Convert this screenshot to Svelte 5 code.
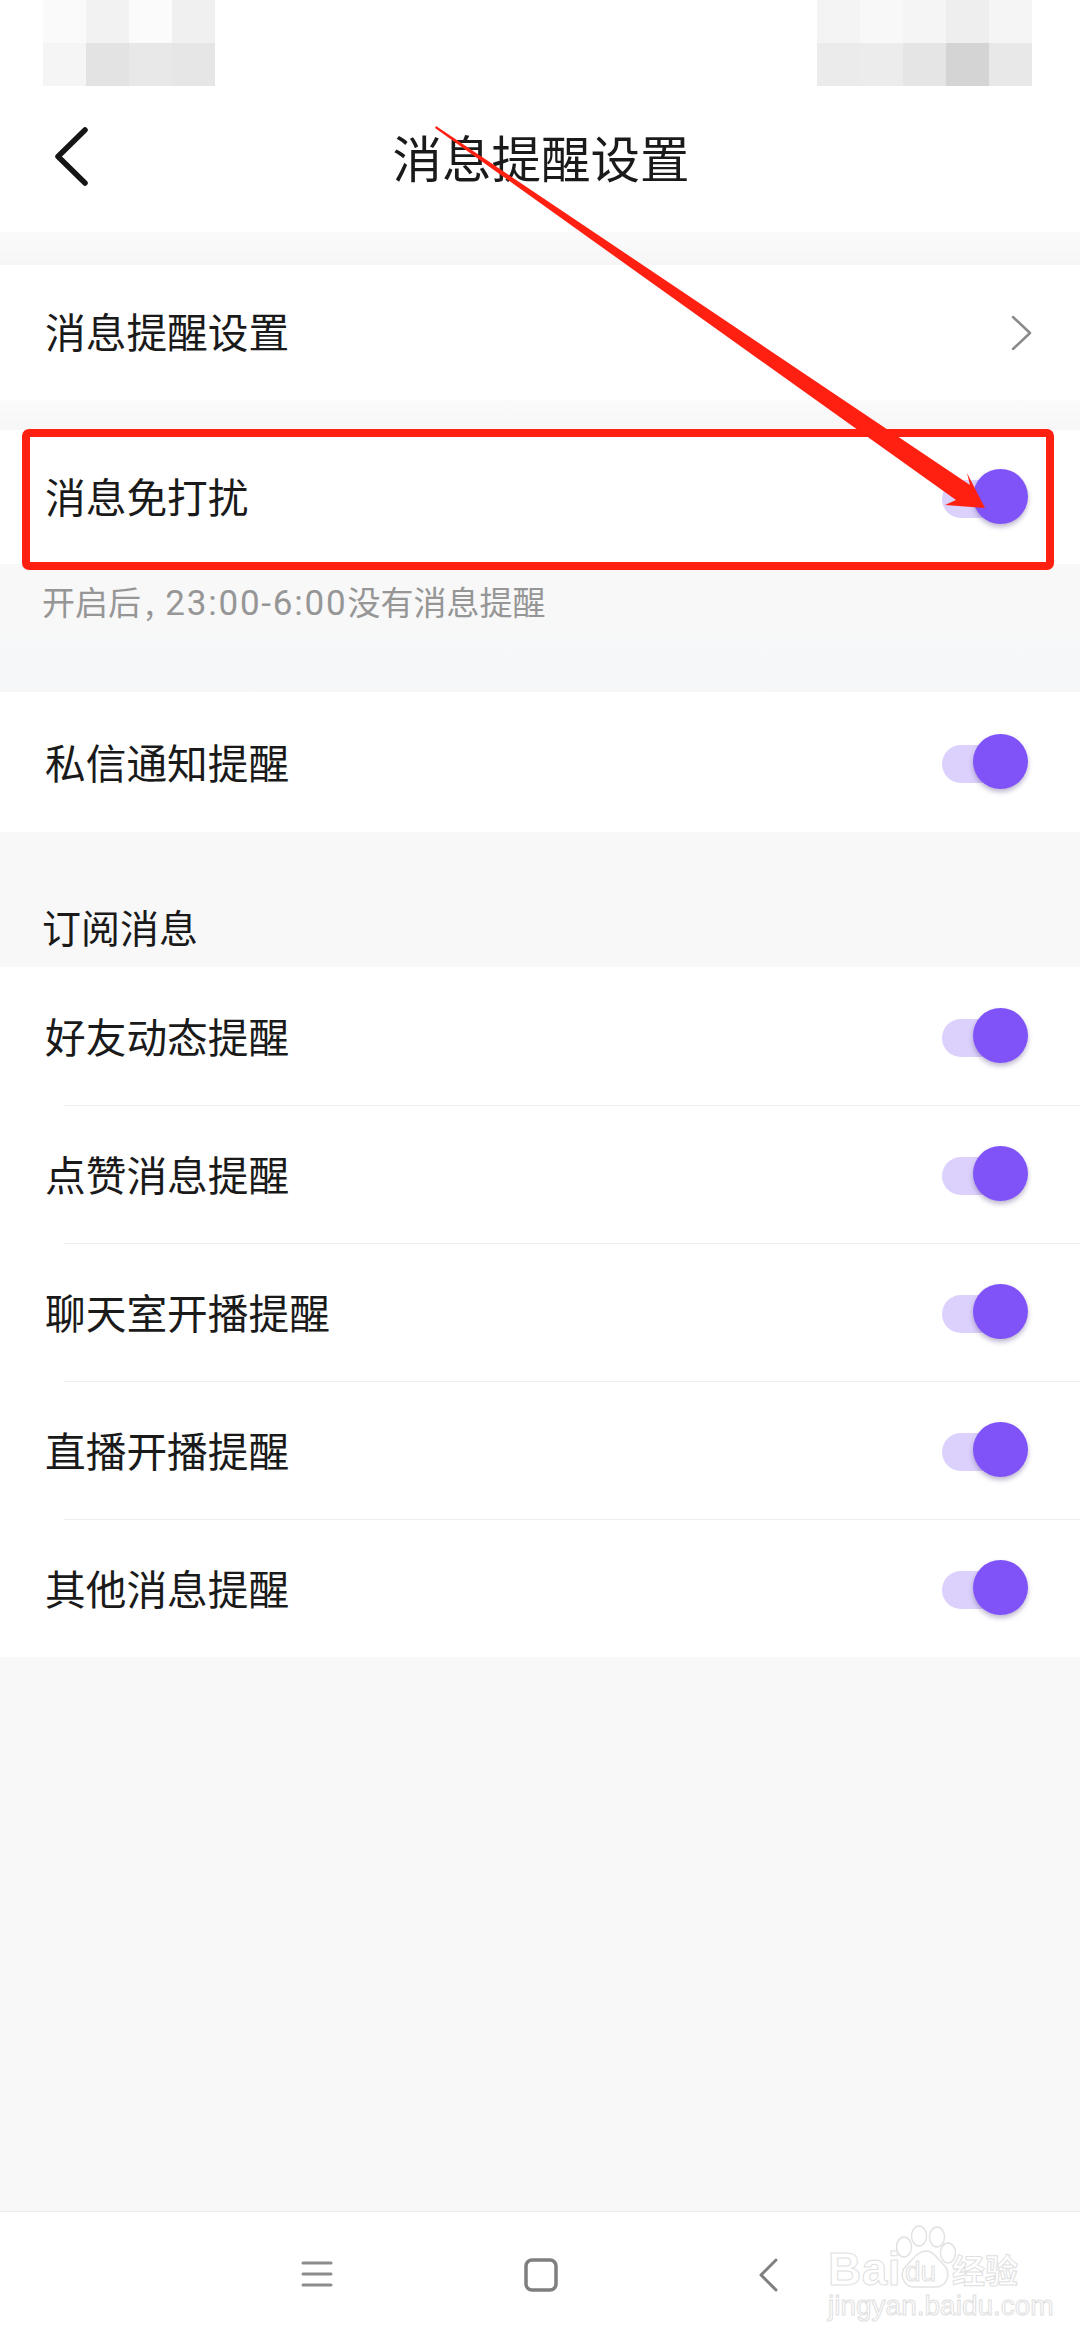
<script lang="ts">
  const leftCells = ['#fafafa', '#f2f2f2', '#fbfbfb', '#f0f0f0', '#f5f5f5', '#e3e3e3', '#e8e8e8', '#e6e6e6'];
  const rightCells = ['#f4f4f4', '#f8f8f8', '#f5f5f5', '#eeeeee', '#f5f5f5', '#ebebeb', '#ececec', '#e5e5e5', '#d4d4d4', '#e8e8e8'];
  const subscriptions = ['好友动态提醒', '点赞消息提醒', '聊天室开播提醒', '直播开播提醒', '其他消息提醒'];
</script>

{#snippet toggle()}
  <span class="toggle"><span class="track"></span><span class="knob"></span></span>
{/snippet}

<div class="page">
  <header class="header">
    <div class="status">
      <div class="mosaic left">
        {#each leftCells as c}<i style="background:{c}"></i>{/each}
      </div>
      <div class="mosaic right">
        {#each rightCells as c}<i style="background:{c}"></i>{/each}
      </div>
    </div>
    <div class="titlebar">
      <svg class="back" width="36" height="62" viewBox="0 0 36 62" fill="none" stroke="#151515" stroke-width="5.5" stroke-linecap="round" stroke-linejoin="round">
        <path d="M31 4 4 30.500 31 57" />
      </svg>
      <h1>消息提醒设置</h1>
    </div>
  </header>

  <div class="gap first"></div>
  <div class="row plain">
    <span class="name">消息提醒设置</span>
    <svg width="22" height="36" viewBox="0 0 22 36" fill="none" stroke="#8a8a8a" stroke-width="2.500" stroke-linecap="round" stroke-linejoin="round">
      <path d="M2 2 19 18 2 34" />
    </svg>
  </div>
  <div class="gap second"></div>
  <div class="row dnd">
    <span class="name">消息免打扰</span>
    {@render toggle()}
  </div>
  <div class="hint">开启后<span class="comma">,</span><span class="nums">23:00-6:00</span>没有消息提醒</div>
  <div class="row chat">
    <span class="name">私信通知提醒</span>
    {@render toggle()}
  </div>
  <div class="label">订阅消息</div>
  <div class="list">
    {#each subscriptions as name}
      <div class="row sub">
        <span class="name">{name}</span>
        {@render toggle()}
      </div>
    {/each}
  </div>

  <div class="fill"></div>

  <nav class="nav">
    <svg class="nav-menu" width="32" height="28" viewBox="0 0 32 28" fill="none" stroke="#8c8c8c" stroke-width="3" stroke-linecap="round">
      <path d="M2 3H30M2 14H30M2 25H30" />
    </svg>
    <svg class="nav-home" width="34" height="34" viewBox="0 0 34 34" fill="none" stroke="#7f7f7f" stroke-width="3.500">
      <rect x="2" y="2" width="30" height="30" rx="6" />
    </svg>
    <svg class="nav-back" width="20" height="34" viewBox="0 0 20 34" fill="none" stroke="#7f7f7f" stroke-width="3" stroke-linecap="round" stroke-linejoin="round">
      <path d="M18 2 3 17 18 32" />
    </svg>
  </nav>

  <!-- annotation drawn over the screenshot -->
  <div class="redbox"></div>
  <svg class="arrow" width="1080" height="600" viewBox="0 0 1080 600">
    <path d="M436 126 970 485 967 473 985 508 945 505 956 500 435 128Z" fill="#ff2012" />
  </svg>

  <div class="watermark">
    <svg class="paw" width="60" height="66" viewBox="0 0 60 66" fill="#fff" stroke="#e2e2e2" stroke-width="1.500">
      <ellipse cx="8" cy="22" rx="7.500" ry="10" />
      <ellipse cx="23" cy="11" rx="7.500" ry="10" />
      <ellipse cx="41" cy="12" rx="7.500" ry="10" />
      <ellipse cx="52" cy="28" rx="7.500" ry="10" />
      <path d="M30 26C38 26 41 34 48 40 55 47 52 62 40 62H18C8 62 2 49 10 41 17 35 21 26 30 26Z" />
    </svg>
    <div class="wm-top">
      <span class="bai">Bai</span><span class="du">du</span><span class="jy">经验</span>
    </div>
    <div class="wm-url">jingyan.baidu.com</div>
  </div>
</div>

<style>
  :global(body) {
    margin: 0;
    background: #f8f8f8;
  }

  .page {
    position: relative;
    width: 1080px;
    height: 2340px;
    display: flex;
    flex-direction: column;
    overflow: hidden;
    background: #f8f8f8;
    font-family: "Noto Sans CJK SC", "Noto Sans", sans-serif;
    color: #1a1a1a;
  }

  .header {
    height: 232px;
    flex: none;
    background: #fff;
  }

  .status {
    display: flex;
    justify-content: space-between;
    padding: 0 48px 0 43px;
    height: 86px;
  }

  .mosaic {
    display: grid;
    grid-auto-rows: 43px;
  }

  .mosaic.left {
    grid-template-columns: repeat(4, 43px);
  }

  .mosaic.right {
    grid-template-columns: repeat(5, 43px);
  }

  .titlebar {
    position: relative;
    display: flex;
    justify-content: center;
    align-items: center;
    height: 72px;
    margin-top: 33px;
  }

  .back {
    position: absolute;
    left: 54px;
    top: 7px;
  }

  h1 {
    margin: 3px 0 0 2px;
    font-size: 49.500px;
    font-weight: 400;
    line-height: 72px;
  }

  .gap {
    flex: none;
  }

  .gap.first {
    height: 33px;
    background: linear-gradient(#fbfbfb, #f6f6f6);
  }

  .gap.second {
    height: 30px;
    background: linear-gradient(#fbfbfb, #f6f6f6);
  }

  .row {
    display: flex;
    justify-content: space-between;
    align-items: center;
    flex: none;
    box-sizing: border-box;
    padding: 0 46px 0 45px;
    background: #fff;
    font-size: 40.700px;
    line-height: 1;
  }

  .row.plain .name,
  .row.dnd .name {
    padding-bottom: 2px;
  }

  .row.plain {
    height: 135px;
    padding-right: 47px;
  }

  .row.dnd {
    height: 134px;
  }

  .row.chat {
    height: 140px;
  }

  .hint {
    flex: none;
    box-sizing: border-box;
    height: 128px;
    padding: 15px 0 0 42px;
    font-size: 33px;
    line-height: 44px;
    color: #969696;
    background: linear-gradient(#f8f8f8 35%, #f5f7f9);
  }

  .comma {
    margin-left: 4px;
  }

  .nums {
    margin-left: 11px;
    font-family: Roboto, sans-serif;
    font-size: 35px;
    letter-spacing: 1.800px;
  }

  .label {
    flex: none;
    box-sizing: border-box;
    height: 135px;
    padding: 68px 0 0 42px;
    font-size: 39px;
    line-height: 52px;
  }

  .list {
    flex: none;
    background: #fff;
  }

  .row.sub {
    height: 138px;
    position: relative;
  }

  .row.sub + .row.sub::before {
    content: "";
    position: absolute;
    left: 64px;
    right: 0;
    top: 0;
    height: 1px;
    background: #efefef;
  }

  .toggle {
    position: relative;
    display: block;
    width: 92px;
    height: 56px;
  }

  .track {
    position: absolute;
    left: 0;
    top: 11px;
    width: 66px;
    height: 38px;
    border-radius: 19px;
    background: #dcd1fc;
  }

  .knob {
    position: absolute;
    right: 6px;
    top: 0;
    width: 55px;
    height: 55px;
    border-radius: 50%;
    background: #7f53f8;
    box-shadow: 0 3px 5px rgba(70, 50, 120, 0.35);
  }

  .fill {
    flex: 1;
  }

  .nav {
    position: relative;
    height: 128px;
    flex: none;
    background: #fff;
    border-top: 1px solid #ebebeb;
  }

  .nav svg {
    position: absolute;
  }

  .nav-menu {
    left: 301px;
    top: 48px;
  }

  .nav-home {
    left: 524px;
    top: 46px;
  }

  .nav-back {
    left: 758px;
    top: 46px;
  }

  .redbox {
    position: absolute;
    left: 22px;
    top: 429px;
    width: 1032px;
    height: 141px;
    box-sizing: border-box;
    border: 8px solid #ff2012;
    border-radius: 7px;
  }

  .arrow {
    position: absolute;
    left: 0;
    top: 0;
  }

  .watermark {
    position: absolute;
    left: 828px;
    top: 2225px;
    width: 200px;
    height: 95px;
  }

  .paw {
    position: absolute;
    left: 68px;
    top: 0;
  }

  .wm-top {
    position: absolute;
    left: 0;
    top: 24px;
    display: flex;
    align-items: center;
    height: 40px;
    white-space: nowrap;
    font-family: "Liberation Sans", sans-serif;
    font-weight: 700;
    color: #fff;
    -webkit-text-stroke: 1px #e0e0e0;
  }

  .bai {
    width: 70px;
    font-size: 46px;
    letter-spacing: 0.500px;
  }

  .du {
    width: 54px;
    padding-top: 6px;
    padding-left: 7px;
    box-sizing: border-box;
    font-size: 28px;
    font-weight: 400;
  }

  .jy {
    font-family: "Noto Sans CJK SC", sans-serif;
    font-size: 33px;
    font-weight: 700;
  }

  .wm-url {
    position: absolute;
    left: 0;
    top: 66px;
    font-family: "Liberation Sans", sans-serif;
    font-size: 28px;
    line-height: 30px;
    color: #fff;
    -webkit-text-stroke: 1px #e0e0e0;
    white-space: nowrap;
  }
</style>
